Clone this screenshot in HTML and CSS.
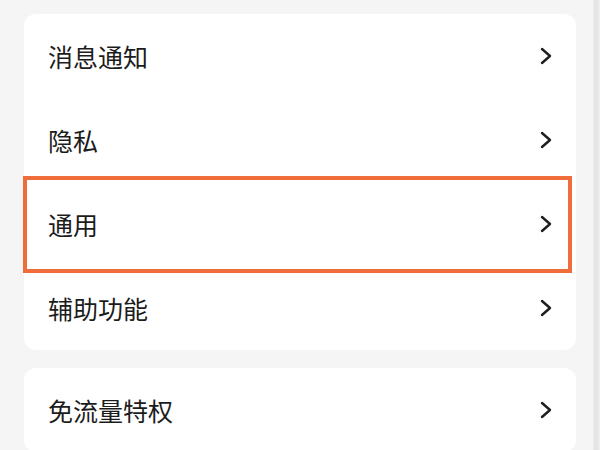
FILE: index.html
```html
<!DOCTYPE html>
<html lang="zh-CN">
<head>
<meta charset="utf-8">
<link rel="stylesheet" href="styles.css">
</head>
<body>
<div class="page">
  <div class="card">
    <div class="row"><span class="label">消息通知</span><svg class="chev" viewBox="0 0 12 18"><polyline points="2,2 10,9 2,16"/></svg></div>
    <div class="row"><span class="label">隐私</span><svg class="chev" viewBox="0 0 12 18"><polyline points="2,2 10,9 2,16"/></svg></div>
    <div class="row highlight"><span class="label">通用</span><svg class="chev" viewBox="0 0 12 18"><polyline points="2,2 10,9 2,16"/></svg></div>
    <div class="row"><span class="label">辅助功能</span><svg class="chev" viewBox="0 0 12 18"><polyline points="2,2 10,9 2,16"/></svg></div>
  </div>
  <div class="card">
    <div class="row"><span class="label">免流量特权</span><svg class="chev" viewBox="0 0 12 18"><polyline points="2,2 10,9 2,16"/></svg></div>
  </div>
</div>
<div class="edge"></div>
</body>
</html>
```

FILE: styles.css
```css
html, body {
  margin: 0;
  padding: 0;
  height: 100%;
}
body {
  display: flex;
  background: #f5f5f5;
  font-family: "Noto Sans CJK SC", "Noto Sans", sans-serif;
  overflow: hidden;
}
.page {
  flex: 1;
  display: flex;
  flex-direction: column;
  gap: 18px;
  padding: 14px 17px 0 24px;
}
.edge {
  width: 7px;
  background: linear-gradient(to right, #ececec, #e2e2e2 40%, #efefef);
}
.card {
  background: #fff;
  border-radius: 12px;
  display: flex;
  flex-direction: column;
}
.row {
  position: relative;
  height: 84px;
  display: flex;
  align-items: center;
  justify-content: space-between;
  padding: 0 24px 0 24px;
}
.label {
  font-size: 25px;
  color: #1c1c1c;
  line-height: 1;
}
.chev {
  width: 12px;
  height: 18px;
  fill: none;
  stroke: #1e1e1e;
  stroke-width: 2.4;
  stroke-linecap: round;
  stroke-linejoin: round;
}
.highlight::after {
  content: "";
  position: absolute;
  top: -6px;
  bottom: -7px;
  left: -1px;
  right: 4px;
  border: 4px solid #ef6d3b;
}
```
